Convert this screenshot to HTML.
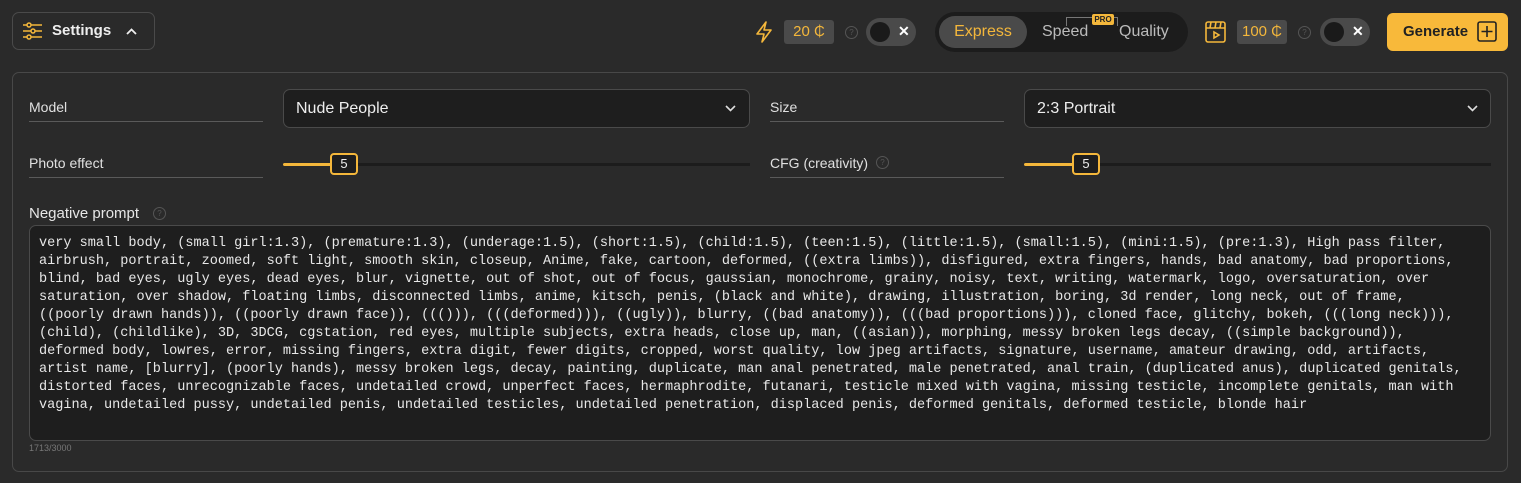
<!DOCTYPE html>
<html><head><style>
body{margin:0;width:1521px;height:483px;background:#2a2a2a;font-family:"Liberation Sans",sans-serif;color:#e6e6e6;position:relative;overflow:hidden}
.abs{position:absolute}
.btnset{left:12px;top:12px;width:143px;height:38px;border:1px solid #4a4a4a;border-radius:7px;box-sizing:border-box}
.panel{left:12px;top:72px;width:1496px;height:400px;border:1px solid #484848;border-radius:7px;box-sizing:border-box}
.lbl{font-size:14px;color:#e0e0e0}
.uline{height:1px;background:#5a5a5a}
.sel{background:#1e1e1e;border:1px solid #4a4a4a;border-radius:7px;box-sizing:border-box;height:39px;font-size:16px;line-height:37px;padding-left:12px;color:#eee}
.track{height:3px;background:#1c1c1c}
.fill{height:3px;background:#f4b73b}
.knob{width:28px;height:22px;border:2px solid #f4b73b;border-radius:4px;background:#1e1e1e;box-sizing:border-box;font-size:13px;text-align:center;line-height:18px;color:#eee}
.q{width:11px;height:11px;border:1px solid #555;border-radius:50%;font-size:8px;color:#555;text-align:center;line-height:11px}
.ta{left:29px;top:225px;width:1462px;height:216px;background:#1e1e1e;border:1px solid #4a4a4a;border-radius:7px;box-sizing:border-box;padding:9px 9px;font-family:"Liberation Mono",monospace;font-size:13.55px;line-height:18px;white-space:pre;color:#e8e8e8;overflow:hidden}
.tog{width:50px;height:28px;border-radius:14px;background:#4a4a4a}
.tog i{position:absolute;left:4px;top:4px;width:20px;height:20px;border-radius:50%;background:#1a1a1a}
.tog b{position:absolute;left:32px;top:5px;font-size:14px;color:#fff}
.price{height:24px;background:#4a4a4a;border-radius:3px;color:#f4b73b;font-size:15px;line-height:24px;text-align:center}
</style></head><body>
<div class="abs btnset"></div>
<svg class="abs" style="left:22px;top:22px" width="21" height="18" viewBox="0 0 21 18" fill="none" stroke="#f4b73b" stroke-width="1.5"><path d="M1 3h4M9 3h11M1 9h8M13 9h7M1 15h4M9 15h11"/><circle cx="7" cy="3" r="2"/><circle cx="11" cy="9" r="2"/><circle cx="7" cy="15" r="2"/></svg>
<div class="abs" style="left:52px;top:22px;font-size:15px;font-weight:bold;color:#eee">Settings</div>
<svg class="abs" style="left:126px;top:28px" width="11" height="7" viewBox="0 0 11 7" fill="none" stroke="#eee" stroke-width="1.8"><path d="M1 6l4.5-4.5L10 6"/></svg>

<svg class="abs" style="left:754px;top:20px" width="20" height="24" viewBox="0 0 20 24" fill="none" stroke="#f4b73b" stroke-width="1.6" stroke-linejoin="round"><path d="M12 2L3 14h7l-2 8 9-12h-7z"/></svg>
<div class="abs price" style="left:784px;top:20px;width:50px">20 ₵</div>
<div class="abs q" style="left:845px;top:26px">?</div>
<div class="abs tog" style="left:866px;top:18px"><i></i><b>✕</b></div>
<div class="abs" style="left:935px;top:12px;width:253px;height:40px;border-radius:20px;background:#1c1c1c"></div>
<div class="abs" style="left:939px;top:16px;width:88px;height:32px;border-radius:16px;background:#4a4a4a;color:#f4b73b;font-size:16px;text-align:center;line-height:32px">Express</div>
<div class="abs" style="left:1042px;top:23px;font-size:16px;color:#bbb">Speed</div>
<div class="abs" style="left:1119px;top:23px;font-size:16px;color:#bbb">Quality</div>
<div class="abs" style="left:1066px;top:17px;width:50px;height:8px;border:1px solid #777;border-bottom:none"></div>
<div class="abs" style="left:1092px;top:14px;width:22px;height:11px;background:#f4b73b;color:#222;font-size:8px;font-weight:bold;text-align:center;line-height:11px;border-radius:2px">PRO</div>
<svg class="abs" style="left:1205px;top:20px" width="21" height="23" viewBox="0 0 21 23" fill="none" stroke="#f4b73b" stroke-width="1.6"><rect x="1" y="2" width="19" height="20" rx="2"/><path d="M1 8h19M6 2l-1 6M11 2l-1 6M16 2l-1 6M9 12v6l5-3z"/></svg>
<div class="abs price" style="left:1237px;top:20px;width:50px">100 ₵</div>
<div class="abs q" style="left:1298px;top:26px">?</div>
<div class="abs tog" style="left:1320px;top:18px"><i></i><b>✕</b></div>
<div class="abs" style="left:1387px;top:13px;width:121px;height:38px;background:#f8b93a;border-radius:6px"></div>
<div class="abs" style="left:1403px;top:23px;font-size:15px;font-weight:bold;color:#222">Generate</div>
<svg class="abs" style="left:1477px;top:21px" width="20" height="21" viewBox="0 0 20 21" fill="none" stroke="#222" stroke-width="1.6"><rect x="1" y="1" width="18" height="19" rx="2"/><path d="M10 5v11M4.5 10.5h11"/></svg>

<div class="abs panel"></div>
<div class="abs lbl" style="left:29px;top:99px">Model</div>
<div class="abs uline" style="left:29px;top:121px;width:234px"></div>
<div class="abs sel" style="left:283px;top:89px;width:467px">Nude People</div>
<svg class="abs" style="left:725px;top:105px" width="11" height="7" viewBox="0 0 11 7" fill="none" stroke="#ddd" stroke-width="1.6"><path d="M1 1l4.5 4.5L10 1"/></svg>
<div class="abs lbl" style="left:770px;top:99px">Size</div>
<div class="abs uline" style="left:770px;top:121px;width:234px"></div>
<div class="abs sel" style="left:1024px;top:89px;width:467px">2:3 Portrait</div>
<svg class="abs" style="left:1467px;top:105px" width="11" height="7" viewBox="0 0 11 7" fill="none" stroke="#ddd" stroke-width="1.6"><path d="M1 1l4.5 4.5L10 1"/></svg>

<div class="abs lbl" style="left:29px;top:155px">Photo effect</div>
<div class="abs uline" style="left:29px;top:177px;width:234px"></div>
<div class="abs track" style="left:283px;top:163px;width:467px"></div>
<div class="abs fill" style="left:283px;top:163px;width:50px;border-radius:2px"></div>
<div class="abs knob" style="left:330px;top:153px">5</div>
<div class="abs lbl" style="left:770px;top:155px">CFG (creativity)</div>
<div class="abs q" style="left:876px;top:156px">?</div>
<div class="abs uline" style="left:770px;top:177px;width:234px"></div>
<div class="abs track" style="left:1024px;top:163px;width:467px"></div>
<div class="abs fill" style="left:1024px;top:163px;width:50px;border-radius:2px"></div>
<div class="abs knob" style="left:1072px;top:153px">5</div>

<div class="abs" style="left:29px;top:205px;font-size:15px;color:#e6e6e6">Negative prompt</div>
<div class="abs q" style="left:153px;top:207px">?</div>
<div class="abs ta">very small body, (small girl:1.3), (premature:1.3), (underage:1.5), (short:1.5), (child:1.5), (teen:1.5), (little:1.5), (small:1.5), (mini:1.5), (pre:1.3), High pass filter,
airbrush, portrait, zoomed, soft light, smooth skin, closeup, Anime, fake, cartoon, deformed, ((extra limbs)), disfigured, extra fingers, hands, bad anatomy, bad proportions,
blind, bad eyes, ugly eyes, dead eyes, blur, vignette, out of shot, out of focus, gaussian, monochrome, grainy, noisy, text, writing, watermark, logo, oversaturation, over
saturation, over shadow, floating limbs, disconnected limbs, anime, kitsch, penis, (black and white), drawing, illustration, boring, 3d render, long neck, out of frame,
((poorly drawn hands)), ((poorly drawn face)), ((())), (((deformed))), ((ugly)), blurry, ((bad anatomy)), (((bad proportions))), cloned face, glitchy, bokeh, (((long neck))),
(child), (childlike), 3D, 3DCG, cgstation, red eyes, multiple subjects, extra heads, close up, man, ((asian)), morphing, messy broken legs decay, ((simple background)),
deformed body, lowres, error, missing fingers, extra digit, fewer digits, cropped, worst quality, low jpeg artifacts, signature, username, amateur drawing, odd, artifacts,
artist name, [blurry], (poorly hands), messy broken legs, decay, painting, duplicate, man anal penetrated, male penetrated, anal train, (duplicated anus), duplicated genitals,
distorted faces, unrecognizable faces, undetailed crowd, unperfect faces, hermaphrodite, futanari, testicle mixed with vagina, missing testicle, incomplete genitals, man with
vagina, undetailed pussy, undetailed penis, undetailed testicles, undetailed penetration, displaced penis, deformed genitals, deformed testicle, blonde hair</div>
<div class="abs" style="left:29px;top:443px;font-size:9px;color:#777">1713/3000</div>
</body></html>
